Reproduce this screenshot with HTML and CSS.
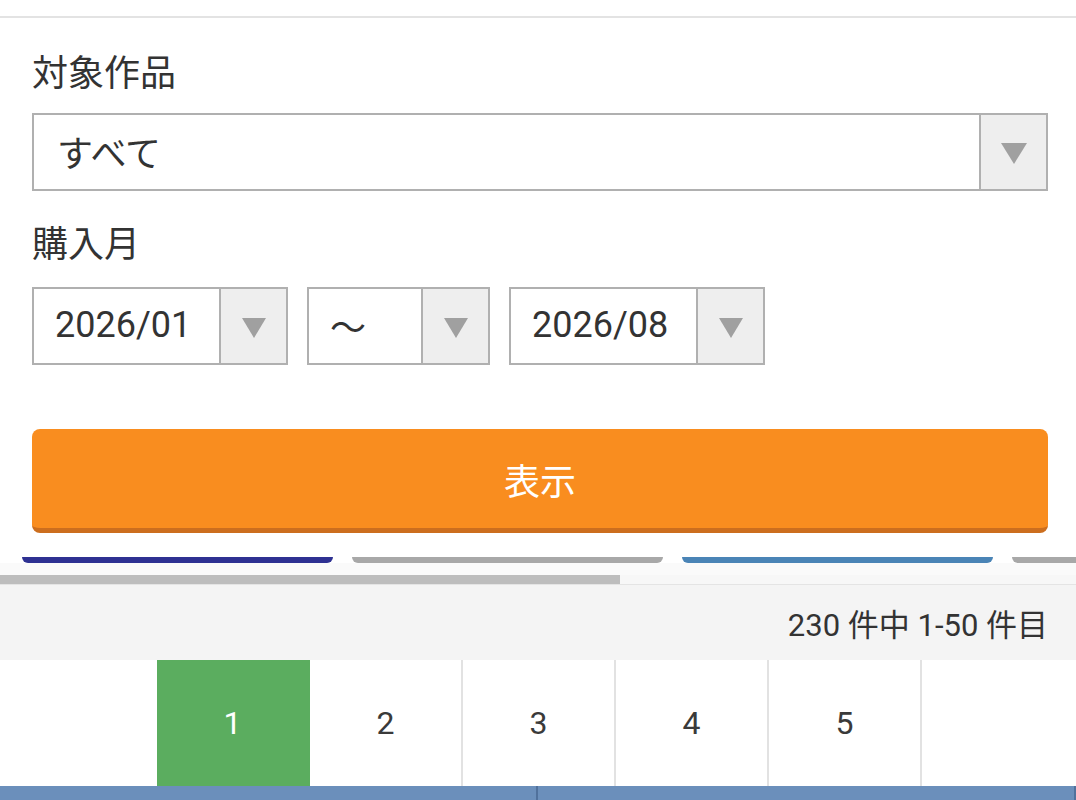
FILE: index.html
```html
<!DOCTYPE html>
<html lang="ja">
<head>
  <meta charset="UTF-8" />
  <meta name="viewport" content="width=device-width, initial-scale=1.0"/>
  <title>購入履歴</title>
  <link rel="stylesheet" href="styles.css">
</head>
<body>
  <div class="topbar"></div>

  <section class="filter">
    <div class="field-label">対象作品</div>
    <div class="select select-wide">
      <span class="select-value">すべて</span>
      <span class="select-arrow"><i class="tri"></i></span>
    </div>

    <div class="field-label field-month">購入月</div>
    <div class="date-row">
      <div class="select select-month">
        <span class="select-value">2026/01</span>
        <span class="select-arrow"><i class="tri"></i></span>
      </div>
      <div class="select select-tilde">
        <span class="select-value">〜</span>
        <span class="select-arrow"><i class="tri"></i></span>
      </div>
      <div class="select select-month">
        <span class="select-value">2026/08</span>
        <span class="select-arrow"><i class="tri"></i></span>
      </div>
    </div>

    <button type="button" class="show-btn">表示</button>
  </section>

  <!-- category tabs (scrolled under the filter panel) -->
  <div class="tabs">
    <div class="tab tab-navy"></div>
    <div class="tab tab-gray"></div>
    <div class="tab tab-blue"></div>
    <div class="tab tab-gray"></div>
  </div>
  <div class="tabs-pad"></div>
  <div class="tabs-scroll"><div class="tabs-thumb"></div></div>

  <div class="result-count">230 件中 1-50 件目</div>

  <nav class="pager">
    <a class="page active">1</a>
    <a class="page">2</a>
    <a class="page">3</a>
    <a class="page">4</a>
    <a class="page">5</a>
  </nav>

  <div class="table-head">
    <div class="th"></div>
    <div class="th"></div>
  </div>
</body>
</html>
```

FILE: styles.css
```css
body {
  font-family: Roboto, "Noto Sans CJK JP", sans-serif;
  background: #fff;
  color: #333;
  margin: 0;
  overflow: hidden;
}

.topbar {
  height: 16px;
  border-bottom: 2px solid #e3e3e3;
}

.filter {
  padding: 32px 28px 24px 32px;
}

.field-label {
  font-size: 36px;
  line-height: 48px;
  height: 48px;
}

.field-month {
  margin-top: 30px;
}

.select {
  display: flex;
  height: 78px;
  box-sizing: border-box;
  border: 2px solid #b0b0b0;
  background: white;
  margin-top: 15px;
}

.select-value {
  flex: 1;
  display: flex;
  align-items: center;
  padding-left: 21px;
  padding-bottom: 2px;
  font-size: 36px;
}

.select-wide .select-value {
  padding-left: 23px;
}

.select-arrow {
  width: 65px;
  border-left: 2px solid #b0b0b0;
  background: #eeeeee;
  display: flex;
  align-items: center;
  justify-content: center;
}

.tri {
  width: 0;
  height: 0;
  border-left: 12px solid transparent;
  border-right: 12px solid transparent;
  border-top: 20px solid #a0a0a0;
  margin-top: 3px;
}

.select-wide .tri {
  border-left-width: 13px;
  border-right-width: 13px;
  border-top-width: 21px;
}

.date-row {
  display: flex;
  gap: 19px;
  margin-top: 18px;
}

.date-row .select {
  margin-top: 0;
}

.select-month {
  width: 256px;
}

.select-tilde {
  width: 183px;
}

.show-btn {
  display: block;
  width: 100%;
  height: 104px;
  margin-top: 64px;
  padding: 0;
  box-sizing: border-box;
  background: #f98d1f;
  color: white;
  font-family: inherit;
  font-size: 36px;
  border: none;
  border-bottom: 5px solid #cc6e1e;
  border-radius: 8px;
  cursor: pointer;
}

.tabs {
  display: flex;
  gap: 19px;
  padding-left: 22px;
  height: 6px;
  overflow: hidden;
}

.tab {
  flex: 0 0 311px;
  height: 6px;
  border-radius: 0 0 10px 10px;
}

.tab-navy { background: #2e3192; }
.tab-gray { background: #a8a8a8; }
.tab-blue { background: #4a84b6; }

.tabs-pad {
  height: 12px;
  background: #fafafa;
}

.tabs-scroll {
  height: 9px;
  background: #f7f7f7;
  border-bottom: 1px solid #e4e4e4;
}

.tabs-thumb {
  width: 620px;
  height: 100%;
  background: #bdbdbd;
}

.result-count {
  height: 75px;
  background: #f4f4f4;
  font-size: 31px;
  display: flex;
  align-items: center;
  justify-content: flex-end;
  padding-right: 28px;
  box-sizing: border-box;
}

.pager {
  display: flex;
  height: 126px;
  padding-left: 157px;
  background: white;
}

.page {
  width: 153px;
  box-sizing: border-box;
  border-right: 2px solid #e2e2e2;
  display: flex;
  align-items: center;
  justify-content: center;
  font-size: 32px;
  color: #3a3a3a;
}

.page.active {
  background: #5bad5f;
  border-right-color: #5bad5f;
  color: white;
}

.table-head {
  display: flex;
  height: 14px;
  background: #6b8fbb;
}

.th {
  width: 537px;
  border-right: 2px solid #50719c;
}
```
